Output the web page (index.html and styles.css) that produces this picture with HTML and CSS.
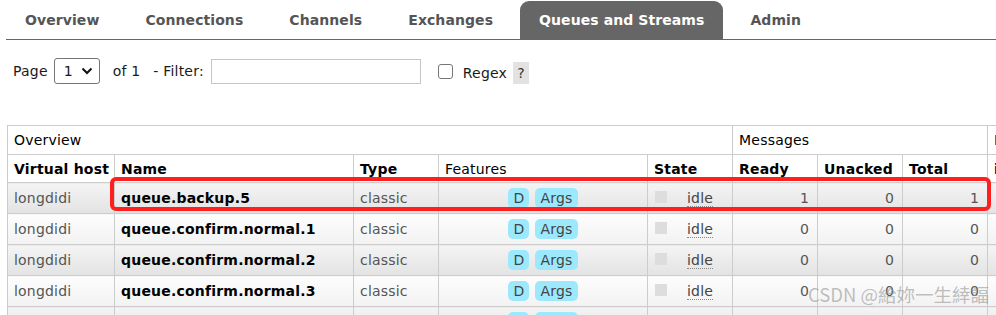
FILE: index.html
```html
<!DOCTYPE html>
<html>
<head>
<meta charset="utf-8">
<link rel="stylesheet" href="styles.css">
</head>
<body>
<div class="page">
  <nav class="tabs">
    <a class="tab">Overview</a>
    <a class="tab">Connections</a>
    <a class="tab">Channels</a>
    <a class="tab">Exchanges</a>
    <a class="tab active">Queues and Streams</a>
    <a class="tab">Admin</a>
  </nav>

  <div class="filter">
    <span>Page</span>
    <div class="select"><span>1</span><svg width="12" height="8" viewBox="0 0 12 8"><path d="M1.5 1.5 L6 6 L10.5 1.5" fill="none" stroke="#111" stroke-width="2"/></svg></div>
    <span class="of">of 1</span>
    <span class="flabel">- Filter:</span>
    <input class="finput" type="text">
    <span class="check"></span>
    <span class="regex">Regex</span>
    <span class="help">?</span>
  </div>

  <div class="table-wrap">
    <table class="list">
      <colgroup>
        <col class="c-vh"><col class="c-name"><col class="c-type"><col class="c-feat"><col class="c-state">
        <col class="c-num"><col class="c-num"><col class="c-num">
        <col class="c-rate"><col class="c-rate"><col class="c-rate">
      </colgroup>
      <thead>
        <tr class="group">
          <th colspan="5">Overview</th>
          <th colspan="3">Messages</th>
          <th colspan="3">Message rates</th>
        </tr>
        <tr class="cols">
          <th>Virtual host</th>
          <th>Name</th>
          <th>Type</th>
          <th class="plain">Features</th>
          <th>State</th>
          <th>Ready</th>
          <th>Unacked</th>
          <th>Total</th>
          <th>incoming</th>
          <th>deliver / get</th>
          <th>ack</th>
        </tr>
      </thead>
      <tbody>
        <tr class="alt1">
          <td class="muted">longdidi</td>
          <td class="qname">queue.backup.5</td>
          <td class="muted">classic</td>
          <td class="feat"><span class="badge">D</span><span class="badge">Args</span></td>
          <td class="state"><span class="dot"></span><abbr>idle</abbr></td>
          <td class="num">1</td><td class="num">0</td><td class="num">1</td>
          <td class="num"></td><td class="num"></td><td class="num"></td>
        </tr>
        <tr class="alt2">
          <td class="muted">longdidi</td>
          <td class="qname">queue.confirm.normal.1</td>
          <td class="muted">classic</td>
          <td class="feat"><span class="badge">D</span><span class="badge">Args</span></td>
          <td class="state"><span class="dot"></span><abbr>idle</abbr></td>
          <td class="num">0</td><td class="num">0</td><td class="num">0</td>
          <td class="num"></td><td class="num"></td><td class="num"></td>
        </tr>
        <tr class="alt1">
          <td class="muted">longdidi</td>
          <td class="qname">queue.confirm.normal.2</td>
          <td class="muted">classic</td>
          <td class="feat"><span class="badge">D</span><span class="badge">Args</span></td>
          <td class="state"><span class="dot"></span><abbr>idle</abbr></td>
          <td class="num">0</td><td class="num">0</td><td class="num">0</td>
          <td class="num"></td><td class="num"></td><td class="num"></td>
        </tr>
        <tr class="alt2">
          <td class="muted">longdidi</td>
          <td class="qname">queue.confirm.normal.3</td>
          <td class="muted">classic</td>
          <td class="feat"><span class="badge">D</span><span class="badge">Args</span></td>
          <td class="state"><span class="dot"></span><abbr>idle</abbr></td>
          <td class="num">0</td><td class="num">0</td><td class="num">0</td>
          <td class="num"></td><td class="num"></td><td class="num"></td>
        </tr>
        <tr class="alt1">
          <td class="muted">longdidi</td>
          <td class="qname">queue.confirm.normal.4</td>
          <td class="muted">classic</td>
          <td class="feat"><span class="badge">D</span><span class="badge">Args</span></td>
          <td class="state"><span class="dot"></span><abbr>idle</abbr></td>
          <td class="num">0</td><td class="num">0</td><td class="num">0</td>
          <td class="num"></td><td class="num"></td><td class="num"></td>
        </tr>
      </tbody>
    </table>
  </div>

  <div class="highlight"></div>
  <div class="watermark">CSDN @給妳一生緈諨</div>
</div>
</body>
</html>
```

FILE: styles.css
```css
html, body {
  margin: 0;
  padding: 0;
  background: #fff;
}
body {
  font-family: "DejaVu Sans", Verdana, sans-serif;
  font-size: 14px;
  letter-spacing: 0.2px;
  color: #000;
}
.page {
  position: relative;
  width: 996px;
  height: 315px;
  overflow: hidden;
}

/* tabs */
.tabs {
  display: flex;
  margin-left: 6px;
  padding-top: 1px;
  border-bottom: 1px solid #666;
}
.tab {
  display: block;
  height: 38px;
  line-height: 39px;
  padding: 0 19px;
  margin-right: 8px;
  font-weight: bold;
  letter-spacing: 0.08px;
  color: #555;
  border-radius: 9px 9px 0 0;
  white-space: nowrap;
}
.tab.active {
  background: #666;
  color: #fff;
}

/* filter row */
.filter {
  display: flex;
  align-items: center;
  height: 26px;
  margin-top: 18px;
  padding-left: 13px;
  color: #1a1a1a;
}
.select {
  display: flex;
  align-items: center;
  box-sizing: border-box;
  width: 46px;
  height: 26px;
  margin-left: 6px;
  padding-left: 9px;
  border: 1px solid #767676;
  border-radius: 3px;
}
.select svg {
  margin-left: auto;
  margin-right: 6px;
}
.of {
  margin-left: 13px;
}
.flabel {
  margin-left: 13px;
}
.finput {
  box-sizing: border-box;
  width: 210px;
  height: 25px;
  margin: 1px 0 0 7px;
  padding: 0;
  border: 1px solid #c6c6c6;
  background: #fff;
}
.check {
  box-sizing: border-box;
  width: 15px;
  height: 15px;
  margin-left: 17px;
  border: 1px solid #767676;
  border-radius: 3px;
}
.regex {
  margin-left: 10px;
  margin-top: 4px;
}
.help {
  display: flex;
  align-items: center;
  justify-content: center;
  width: 16px;
  height: 22px;
  margin-left: 6px;
  margin-top: 4px;
  background: #e2e2e2;
  color: #333;
}

/* table */
.table-wrap {
  margin-top: 41px;
  padding-left: 7px;
}
table.list {
  border-collapse: collapse;
  table-layout: fixed;
  width: 1310px;
}
.c-vh { width: 107px; }
.c-name { width: 239px; }
.c-type { width: 85px; }
.c-feat { width: 209px; }
.c-state { width: 85px; }
.c-num { width: 85px; }
.c-rate { width: 110px; }

.list th, .list td {
  border: 1px solid #ccc;
  padding: 0 6px;
  text-align: left;
  white-space: nowrap;
  overflow: hidden;
}
.list tr.group th {
  height: 28px;
  font-weight: normal;
  background: #fff;
}
.list tr.cols th {
  height: 27px;
  background: #fff;
  font-weight: bold;
}
.list tr.cols th.plain {
  font-weight: normal;
}
.list tbody td {
  height: 30px;
  color: #555;
}
.list tr.alt1 td {
  background: linear-gradient(#f4f4f4, #e3e3e3);
}
.list tr.alt2 td {
  background: linear-gradient(#fdfdfd, #f2f2f2);
}
.list td.qname {
  font-weight: bold;
  color: #000;
}
.list td.num {
  text-align: right;
  padding-right: 8px;
}
.list td.feat {
  text-align: center;
}
.badge {
  display: inline-block;
  height: 20px;
  line-height: 20px;
  padding: 0 5px;
  margin: 0 3px;
  border-radius: 5px;
  background: #9ce9fd;
  color: #444;
  vertical-align: middle;
}
.list td.state {
  white-space: nowrap;
  padding-left: 7px;
}
.dot {
  display: inline-block;
  width: 12px;
  height: 12px;
  margin-right: 20px;
  background: #ddd;
  vertical-align: middle;
  position: relative;
  top: -2px;
}
.state abbr {
  color: #444;
  text-decoration: none;
  border-bottom: 1px dotted #888;
}

/* annotation overlays */
.highlight {
  position: absolute;
  left: 110px;
  top: 177px;
  width: 881px;
  height: 34px;
  box-sizing: border-box;
  border: 4px solid #ff1f1f;
  border-radius: 6px;
}
.watermark {
  position: absolute;
  left: 808px;
  top: 285px;
  font-family: "Noto Sans CJK SC", "Noto Sans", sans-serif;
  font-size: 18.5px;
  letter-spacing: 0;
  line-height: 1;
  color: rgba(150, 150, 150, 0.6);
  white-space: nowrap;
}
```
